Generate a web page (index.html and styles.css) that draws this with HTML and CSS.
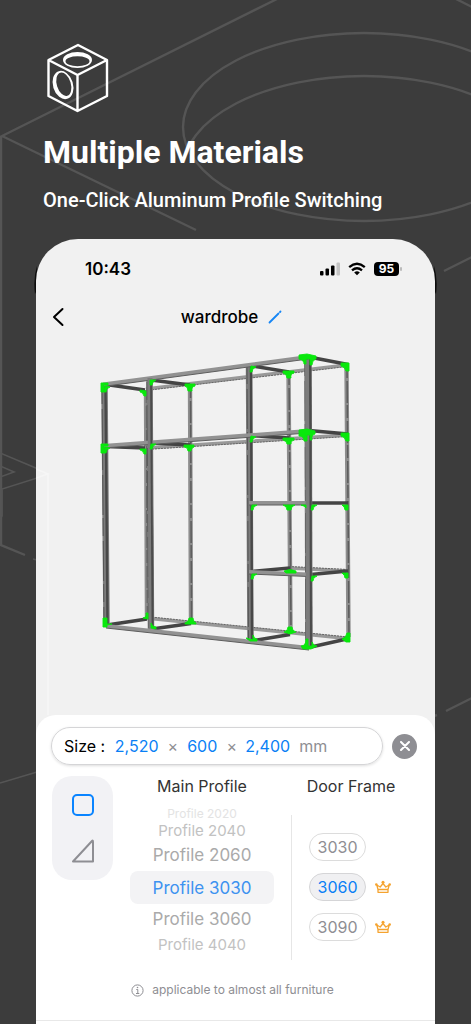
FILE: index.html
```
<!DOCTYPE html>
<html lang="en">
<head>
<meta charset="utf-8">
<meta name="viewport" content="width=device-width, initial-scale=1">
<title>Multiple Materials</title>
<link rel="stylesheet" href="styles.css">
</head>
<body>
<svg class="backdrop" viewBox="0 0 471 1024" preserveAspectRatio="xMidYMin slice" aria-hidden="true">
  <defs><clipPath id="hole"><ellipse cx="364" cy="127" rx="181" ry="94"/></clipPath></defs>
  <g fill="none" stroke="#555" stroke-width="2.4">
    <path d="M277 -1L2 136L196 230M1 136V545L25 555M456 -1L472 7M444 271L472 257M446 711L472 698M434 716L437 715"/>
    <ellipse cx="364" cy="127" rx="181" ry="94"/>
    <ellipse cx="364" cy="170" rx="181" ry="94" clip-path="url(#hole)"/>
    <path stroke-width="1.6" d="M0 453L50 474L2 489V516L0 519M0 466L14 472L0 477M33 559L37 560M0 783L37 772"/>
  </g>
  <path d="M37 266Q33 278 35 294L37 290ZM434 266Q438 278 436 294L434 290Z" fill="#0c0c0c"/>
</svg>
<div class="page">
  <header class="intro">
    <svg class="logo" viewBox="0 0 62 70" aria-hidden="true">
      <g fill="none" stroke="#fff" stroke-width="2.4" stroke-linejoin="round">
        <path d="M31 2L60 17V53L30.500 68L1.500 53V17ZM1.500 17L30.500 32L60 17M30.500 32V68"/>
      </g>
      <path fill="#fff" fill-rule="evenodd" d="M16 17a14.500 8 0 1 0 29 0a14.500 8 0 1 0-29 0ZM18.500 18.300a12 5 0 1 0 24 0a12 5 0 1 0-24 0Z"/>
      <g transform="rotate(-17 16 42)"><path fill="#fff" fill-rule="evenodd" d="M6 42a10 14.500 0 1 0 20 0a10 14.500 0 1 0-20 0ZM10 41.500a7 12 0 1 0 14 0a7 12 0 1 0-14 0Z"/></g>
    </svg>
    <h1 class="headline">Multiple Materials</h1>
    <p class="tagline">One-Click Aluminum Profile Switching</p>
  </header>

  <main class="phone">
    <div class="status">
      <span class="time">10:43</span>
      <div class="indicators">
        <svg width="20" height="14" viewBox="0 0 20 14" aria-label="Signal" role="img">
          <rect x="0" y="9" width="3.500" height="4.500" rx="1"/><rect x="5.500" y="6.500" width="3.500" height="7" rx="1"/><rect x="11" y="3.500" width="3.500" height="10" rx="1"/><rect x="16.500" y="0.500" width="3.500" height="13" rx="1" fill="#c4c4c4"/>
        </svg>
        <svg width="18" height="14" viewBox="0 0 18 14" aria-label="Wi-Fi" role="img">
          <g fill="none" stroke="#000" stroke-width="2.300"><path d="M1.200 5.200Q9 -1.600 16.800 5.200M4 8.300Q9 4.100 14 8.300"/></g><path d="M6.200 10.400Q9 8.200 11.800 10.400L9 13.200Z"/>
        </svg>
        <span class="battery">95</span>
      </div>
    </div>
    <div class="nav">
      <button class="back" type="button" aria-label="Back"><svg width="12" height="20" viewBox="0 0 12 20"><path d="M10.500 2L2 10L10.500 18" fill="none" stroke="#000" stroke-width="2" stroke-linecap="round" stroke-linejoin="round"/></svg></button>
      <h2 class="name">wardrobe</h2>
      <button class="rename" type="button" aria-label="Rename"><svg width="14" height="14" viewBox="0 0 14 14"><path d="M1.500 12.500L10.500 3.500M12 2L12.500 1.500" stroke="#1686f5" stroke-width="1.800" stroke-linecap="round"/></svg></button>
    </div>

    <svg class="model" viewBox="36 335 399 380" role="img" aria-label="Wardrobe frame">
      <path d="M36 469L48 474L36 478M48 474V715" fill="none" stroke="#f6f6f6" stroke-width="1.500"/>
      <!-- rear rails -->
      <g stroke="#999" stroke-width="3.500"><path d="M146 389L347 365M146 448L347 435M146 618L348 638.500M289 568L348 571"/></g>
      <g stroke="#666" stroke-width="1" stroke-dasharray="2 1"><path d="M146 390.500L347 366.500M146 449.500L347 436.500M146 616.500L348 637M289 566.500L348 569.500"/></g>
      <!-- rear posts -->
      <g stroke="#8d8d8d" stroke-width="4.400"><path d="M146 390L147 618M190 385L191 622M288.500 372L290.500 631M346.500 365L348.500 637"/></g>
      <g stroke="#5d5d5d" stroke-width="1.500" stroke-dasharray="13 3 22 2"><path d="M146.500 390L147.500 618M190.500 385L191.500 622M289 372L291 631M347 365L349 637"/></g>
      <!-- depth rails -->
      <g stroke="#444" stroke-width="3.500"><path d="M106 384.500L145 390M151 380L190 385M252 366L289 372M309 357L348 364.500M106 446.500L145 448M151 443L190 445M252 435.500L289 438M309 430.500L348 434M311 503H348M252 571.500L290 568M311 574.500L348 571M107 625L147 619M152 629L191 623.500M254 640.500L290 634.500M311 647L349 638.500"/></g>
      <!-- front posts -->
      <g stroke="#7c7c7c" stroke-width="6.500"><path d="M104.500 384L106.500 625M149.500 378L151 629M249 364L250.500 642"/><path stroke-width="7.500" d="M308 357L309 648"/></g>
      <g stroke="#484848" stroke-width="2.400"><path d="M105.500 386L107.500 624M151 379L152.500 628M251 366L252 641M310 358L311 647"/></g>
      <g stroke="#555" stroke-width="1" stroke-dasharray="18 5 40 3"><path d="M102 386L104 624M147 382L148.500 628M247 366L248.500 641M305 358L306 647"/></g>
      <!-- front rails -->
      <g stroke="#929292" stroke-width="4"><path d="M103 384.500L308 357M103 446L308 431M249 503H306M249 572L308 574.500M106 626L309 648"/></g>
      <g stroke="#5e5e5e" stroke-width="1"><path d="M103 386.500L308 359M103 448L308 433M249 505H306M249 574L308 576.500M106 628L309 650"/></g>
      <path stroke="#7c7c7c" stroke-width="5" d="M150 378L151 628"/><path stroke="#4b4b4b" stroke-width="1.800" d="M151 380L152.500 627"/>
      <path stroke="#7c7c7c" stroke-width="6" d="M308 360L309 646"/><path stroke="#4b4b4b" stroke-width="2" d="M310 360L311 646"/>
      <!-- corner brackets -->
      <g fill="#08e80c" stroke="#08e80c" stroke-width=".9">
        <path d="M101 383h7v2h-4v7h-3ZM105 386l5 1q-4 1-4 5h-2ZM101 444h7v2h-4v7h-3ZM105 447l5 1q-4 1-4 5h-2Z"/>
        <path d="M140 390l6 1v5h-2q-1-4-4-4ZM140 449l6 0v5h-2q-1-4-4-4ZM150 380l6 0q-4 2-4 5h-2ZM151 444l5 0q-4 2-4 5h-2Z"/>
        <path d="M185 384h10v2q-4 1-3 5h-4q0-4-3-5Z"/>
        <path d="M184 445h10v2q-3 1-3 4h-3q0-4-4-4ZM283 371h11v2q-4 1-3 5h-4q0-4-4-5ZM283 438h11v2q-4 1-3 4h-4q0-3-4-4ZM283 505h12q-4 1-4 5h-4q0-4-4-5Z"/>
        <path d="M299 355l8-1l9 2v3q-4 1-4 6h-2v-6h-4v5h-2q0-4-5-5ZM299 430l8-1l8 2v3q-4 1-3 6h-2v-5h-3v6h-3q0-5-5-5Z"/>
        <path d="M341 363l8 0v8h-3q-1-4-5-5ZM341 433l8 0v8h-3q-1-4-5-5ZM342 505h6v5h-3q0-3-3-5ZM342 573h6v5h-3q0-3-3-5Z"/>
        <path d="M251 366l5 1q-4 1-4 5h-2ZM251 436l5 1q-4 1-4 5h-2ZM252 505h5q-4 1-4 5h-2ZM252 574h5q-4 1-4 5h-2ZM312 505h5q-4 1-4 5h-2ZM312 576h5q-4 1-4 5h-2ZM301 505h5v3q-1-2-5-3ZM284 571q6-3 12 0v2h-10Z"/>
        <path d="M103 618h4v6l5 0l-5 1v2h-4ZM143 618q4-1 3-5h2v6ZM151 628v-5q1 4 5 4v2ZM185 623q4-1 4-5h4q0 4 3 5v1h-11ZM246 638l7 2v-5q1 4 4 4v2h-7ZM284 632q4-1 4-5h4q0 4 4 5l-6 2ZM301 646q5 0 5-7h2v7h4v-4q1 4 5 4l-6 3h-8ZM342 639q4-1 5-6h3v9h-4Z"/>
      </g>
    </svg>

    <section class="panel">
      <div class="top-row">
        <div class="size">
          <span class="size-label">Size :</span>
          <input class="dim wide" aria-label="Width" value="2,520"><span class="times">×</span>
          <input class="dim narrow" aria-label="Depth" value="600"><span class="times">×</span>
          <input class="dim wide" aria-label="Height" value="2,400"><span class="unit">mm</span>
        </div>
        <button class="close" type="button" aria-label="Close"><svg width="10" height="10" viewBox="0 0 10 10"><path d="M1 1L9 9M9 1L1 9" stroke="#fff" stroke-width="2" stroke-linecap="round"/></svg></button>
      </div>
      <div class="options">
        <div class="shapes">
          <button type="button" aria-label="Square"><svg width="24" height="24" viewBox="0 0 24 24"><rect x="2" y="2" width="20" height="20" rx="4" fill="none" stroke="#0a84ff" stroke-width="2"/></svg></button>
          <button type="button" aria-label="Triangle"><svg width="24" height="24" viewBox="0 0 24 24"><path d="M2 22.500L21 2Q22 1 22 3V22.500Z" fill="none" stroke="#8e8e93" stroke-width="2" stroke-linejoin="round"/></svg></button>
        </div>
        <div class="profiles">
          <h3>Main Profile</h3>
          <div class="wheel">
            <button type="button" class="row far">Profile 2020</button>
            <button type="button" class="row edge">Profile 2040</button>
            <button type="button" class="row near">Profile 2060</button>
            <button type="button" class="row current">Profile 3030</button>
            <button type="button" class="row near">Profile 3060</button>
            <button type="button" class="row edge">Profile 4040</button>
          </div>
        </div>
        <div class="doors">
          <h3>Door Frame</h3>
          <div class="door-list">
            <div class="door"><button type="button" class="pill">3030</button></div>
            <div class="door"><button type="button" class="pill active">3060</button>
              <svg class="crown" viewBox="0 0 16 14"><g fill="none" stroke="#f5a32f" stroke-width="1.300" stroke-linejoin="round"><path d="M3 9.500L1.800 5L5.200 7L8 3.500L10.800 7L14.200 5L13 9.500ZM3 9.500V12.300H13V9.500"/></g><g fill="#f5a32f"><circle cx="1.300" cy="4.500" r="1.300"/><circle cx="8" cy="2.200" r="1.500"/><circle cx="14.700" cy="4.500" r="1.300"/></g></svg></div>
            <div class="door"><button type="button" class="pill">3090</button>
              <svg class="crown" viewBox="0 0 16 14"><g fill="none" stroke="#f5a32f" stroke-width="1.300" stroke-linejoin="round"><path d="M3 9.500L1.800 5L5.200 7L8 3.500L10.800 7L14.200 5L13 9.500ZM3 9.500V12.300H13V9.500"/></g><g fill="#f5a32f"><circle cx="1.300" cy="4.500" r="1.300"/><circle cx="8" cy="2.200" r="1.500"/><circle cx="14.700" cy="4.500" r="1.300"/></g></svg></div>
          </div>
        </div>
      </div>
      <p class="hint"><svg width="13" height="13" viewBox="0 0 13 13" aria-hidden="true"><circle cx="6.500" cy="6.500" r="5.600" fill="none" stroke="#8e8e93"/><path d="M5.300 5.500H6.800V9.300M5 9.500H8.300" fill="none" stroke="#8e8e93"/><circle cx="6.500" cy="3.500" r=".8" fill="#8e8e93"/></svg>applicable to almost all furniture</p>
    </section>
  </main>
</div>
</body>
</html>
```
FILE: styles.css
```
* { box-sizing: border-box; }
body {
  margin: 0;
  position: relative;
  min-height: 100vh;
  overflow-x: hidden;
  background: #3c3c3c;
  font-family: Inter, "Liberation Sans", sans-serif;
}
h1, h2, h3, p { margin: 0; }
button, input {
  margin: 0;
  padding: 0;
  border: 0;
  background: none;
  font: inherit;
  color: inherit;
}
button { cursor: pointer; }
svg { display: block; }
.backdrop {
  position: absolute;
  inset: 0;
  width: 100%;
  height: 100%;
}
.page {
  position: relative;
  min-height: 100vh;
  display: flex;
  flex-direction: column;
  padding: 0 36px;
}
.intro {
  padding: 43px 0 25px 7px;
  color: #fff;
  font-family: Roboto, sans-serif;
}
.logo { width: 62px; height: 70px; margin-left: 4px; }
.headline {
  margin-top: 19px;
  font-size: 32px;
  line-height: 40px;
  font-weight: 700;
  white-space: nowrap;
}
.tagline {
  margin-top: 14px;
  font-size: 20px;
  line-height: 28px;
  font-weight: 500;
  white-space: nowrap;
}
.phone {
  flex: 1;
  display: flex;
  flex-direction: column;
  overflow: hidden;
  border-radius: 42px 42px 0 0;
  background: #f1f1f1;
}
.status {
  display: flex;
  justify-content: space-between;
  align-items: center;
  height: 60px;
  padding: 0 34px 0 49px;
}
.time { font-size: 17px; font-weight: 600; }
.indicators { display: flex; align-items: center; gap: 8px; }
.battery {
  position: relative;
  width: 25px;
  margin-right: 2px;
  border-radius: 4px;
  background: #000;
  color: #fff;
  font-size: 12px;
  line-height: 14px;
  font-weight: 700;
  text-align: center;
}
.battery::after {
  content: "";
  position: absolute;
  top: 5px;
  right: -3px;
  width: 2px;
  height: 4px;
  border-radius: 1px;
  background: #bbb;
}
.nav {
  display: grid;
  grid-template-columns: 1fr auto 1fr;
  align-items: center;
  gap: 10px;
  height: 36px;
  padding: 0 48px 0 16px;
}
.name { font-size: 17px; line-height: 24px; font-weight: 500; }
.back, .rename { justify-self: start; }
.model { width: 100%; height: auto; }
.panel {
  flex: 1;
  padding: 12px 18px 0 15px;
  border-radius: 20px 20px 0 0;
  background: #fff;
}
.top-row { display: flex; align-items: center; gap: 9px; }
.size {
  flex: 1;
  display: flex;
  align-items: center;
  height: 38px;
  padding-left: 12px;
  border: 1px solid #d5d5d7;
  border-radius: 19px;
  box-shadow: 0 1px 3px #0002;
  font-size: 16px;
}
.size-label { margin-right: 9px; }
.dim { color: #0a7ff5; text-align: center; }
.wide { width: 45px; }
.narrow { width: 32px; }
.times { flex: 0 0 27px; color: #8e8e93; text-align: center; }
.unit { margin-left: 9px; color: #8e8e93; }
.close {
  display: grid;
  place-items: center;
  width: 25px;
  height: 25px;
  border-radius: 50%;
  background: #8e8e93;
}
.options { display: flex; gap: 17px; margin-top: 11px; padding-left: 1px; }
.shapes {
  flex: 0 0 61px;
  align-self: flex-start;
  display: flex;
  flex-direction: column;
  align-items: center;
  gap: 22px;
  height: 104px;
  padding-top: 17px;
  border-radius: 20px;
  background: #f2f2f5;
}
.profiles { flex: 144; }
.doors { flex: 126; }
h3 {
  font-size: 16px;
  line-height: 20px;
  font-weight: 400;
  color: #333;
  text-align: center;
}
.doors h3 { padding-right: 6px; }
.wheel { display: flex; flex-direction: column; padding-top: 10px; }
.row { font-size: 17px; color: #aaa; }
.far { height: 14px; font-size: 12px; color: #e3e3e3; }
.edge { height: 20px; font-size: 15px; color: #c2c2c2; }
.near { height: 30px; }
.current {
  height: 33px;
  margin-top: 1px;
  border-radius: 8px;
  background: #f3f3f5;
  color: #3d92f0;
}
.door-list {
  display: flex;
  flex-direction: column;
  gap: 12px;
  height: 145px;
  margin-top: 19px;
  padding: 18px 0 0 17px;
  border-left: 1px solid #e6e6e6;
}
.door { display: flex; align-items: center; gap: 9px; }
.pill {
  width: 57px;
  height: 28px;
  border: 1px solid #dcdcdc;
  border-radius: 14px;
  color: #8e8e93;
  font-size: 16px;
}
.active { background: #f0f0f2; color: #0a7ff5; border-color: #d5d5d7; }
.crown { width: 16px; height: 14px; }
.hint {
  display: flex;
  justify-content: center;
  align-items: center;
  gap: 8px;
  margin: 20px -18px 0 -15px;
  padding: 0 6px 20px 0;
  border-bottom: 1px solid #e8e8e8;
  color: #8e8e93;
  font-size: 12px;
  line-height: 20px;
}
```
